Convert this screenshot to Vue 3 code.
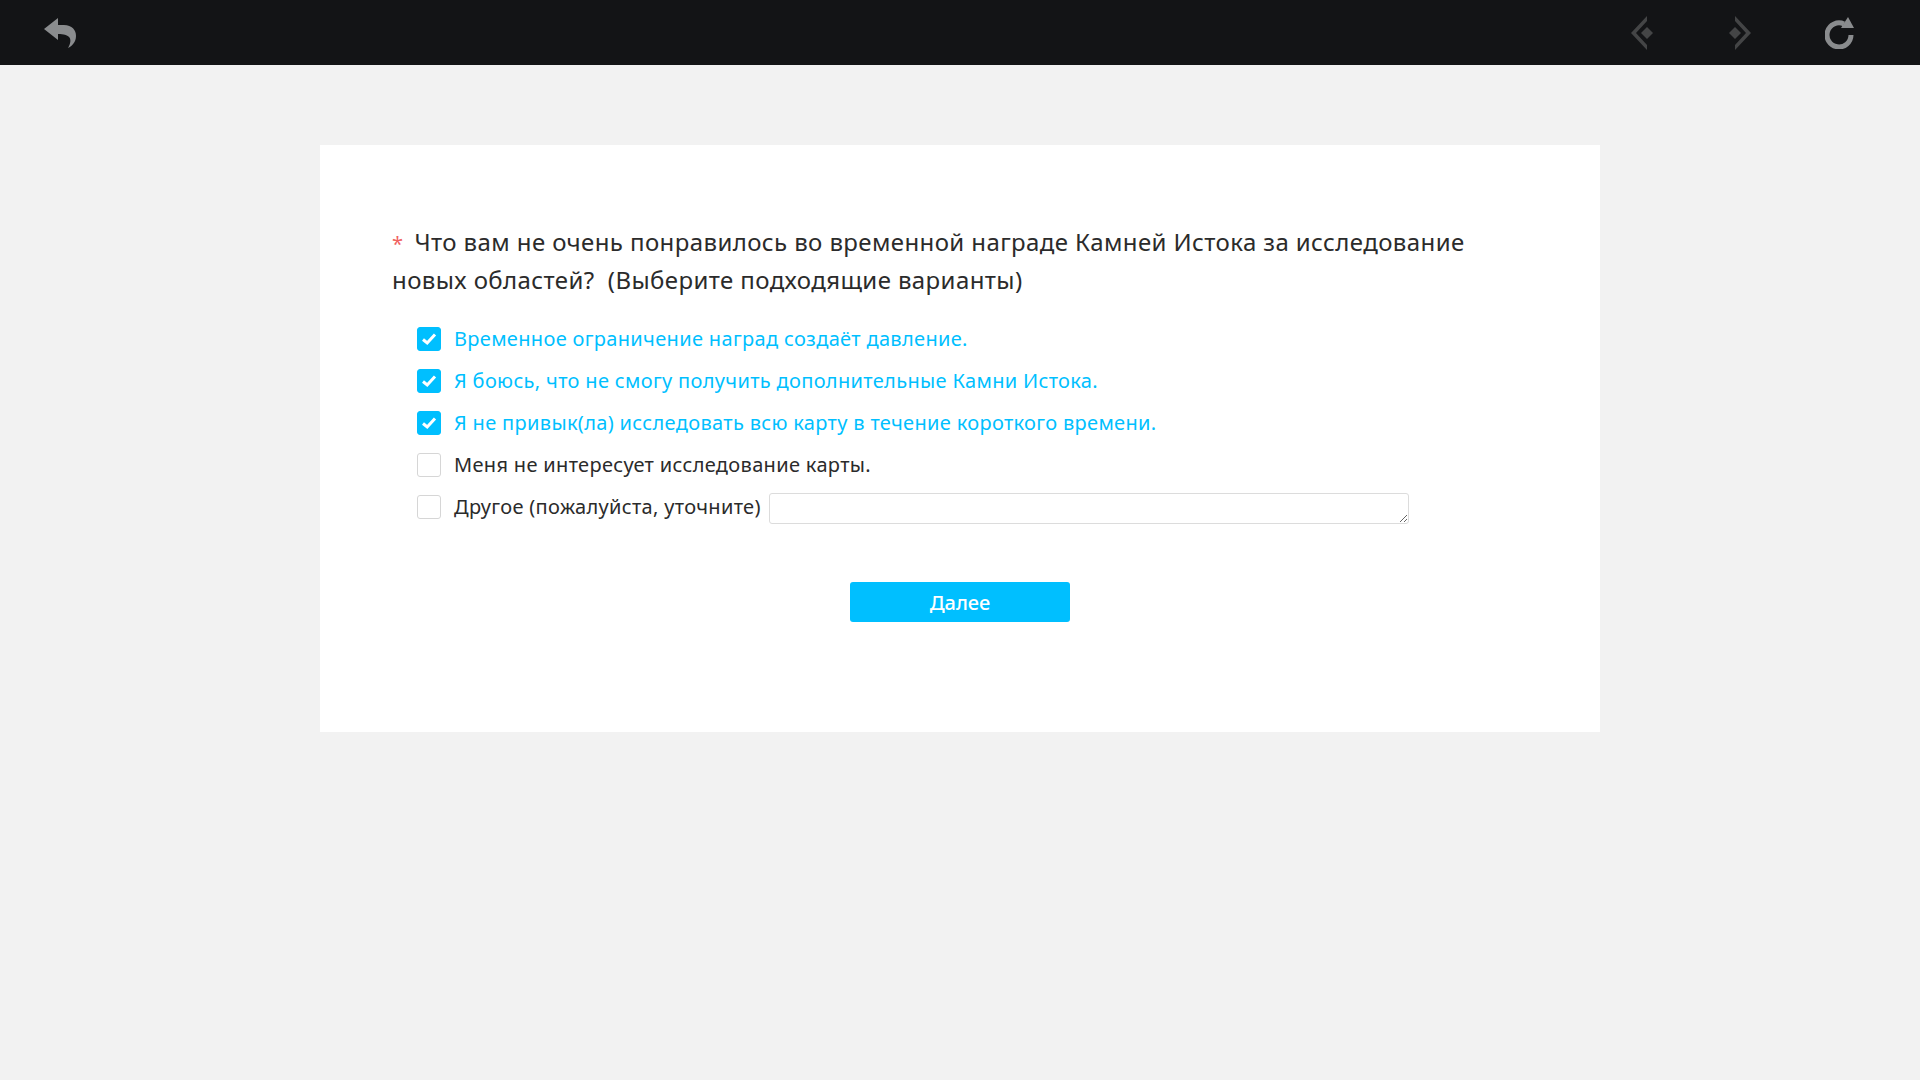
<script setup>
const options = [
  { text: 'Временное ограничение наград создаёт давление.', checked: true },
  { text: 'Я боюсь, что не смогу получить дополнительные Камни Истока.', checked: true },
  { text: 'Я не привык(ла) исследовать всю карту в течение короткого времени.', checked: true },
  { text: 'Меня не интересует исследование карты.', checked: false },
  { text: 'Другое (пожалуйста, уточните)', checked: false, other: true },
]
</script>

<template>
  <div class="page">
    <header class="bar">
      <button class="icon back" aria-label="Назад">
        <svg width="36" height="32" viewBox="0 0 36 32"><path d="M1 12 L15 1 V8 H21 C29 8 33 13 33 19 C33 25 29 29 25 31 C28 26 28 22 26 20 C24 18 21 17 15 17 V23 Z" fill="#8a8c8e"/></svg>
      </button>
      <div class="right">
        <button class="icon nav" aria-label="Предыдущая">
          <svg width="24" height="34" viewBox="0 0 24 34"><path d="M17 0 V5 L6 17 L17 29 V34 L1 17 Z" fill="#444546"/><path d="M17 11 L23 17 L17 23 L11 17 Z" fill="#444546"/></svg>
        </button>
        <button class="icon nav" aria-label="Следующая">
          <svg width="24" height="34" viewBox="0 0 24 34"><path d="M7 0 V5 L18 17 L7 29 V34 L23 17 Z" fill="#444546"/><path d="M7 11 L13 17 L7 23 L1 17 Z" fill="#444546"/></svg>
        </button>
        <button class="icon reload" aria-label="Обновить">
          <svg width="30" height="32" viewBox="0 0 30 32"><path d="M19 7 A12 12 0 1 0 26 18" fill="none" stroke="#8a8c8e" stroke-width="5"/><path d="M16 11 L23 0 L29 11 Z" fill="#8a8c8e"/></svg>
        </button>
      </div>
    </header>

    <main class="card">
      <h1 class="title"><span class="star">*</span>Что вам не очень понравилось во временной награде Камней Истока за исследование новых областей?&nbsp; (Выберите подходящие варианты)</h1>
      <ul class="options">
        <li v-for="o in options" :key="o.text" class="option" :class="{ on: o.checked }">
          <span class="box">
            <svg v-if="o.checked" width="16" height="14" viewBox="0 0 16 14"><path d="M2 7.5 L6.2 11 L14 2.5" fill="none" stroke="#fff" stroke-width="3"/></svg>
          </span>
          <span class="label">{{ o.text }}</span>
          <textarea v-if="o.other" class="other"></textarea>
        </li>
      </ul>
      <div class="actions"><button class="next">Далее</button></div>
    </main>
  </div>
</template>

<style>
html, body { margin: 0; background: #f2f2f2; }
</style>

<style scoped>
.page { min-height: 1080px; background: #f2f2f2; font-family: "Noto Sans", "Open Sans", sans-serif; color: #2b2b2b; }
.bar { height: 65px; background: #131416; display: flex; align-items: center; justify-content: space-between; padding: 0 65px 0 43px; box-sizing: border-box; }
.icon { background: none; border: 0; padding: 0; display: flex; }
.right { display: flex; align-items: center; }
.nav { margin-right: 74px; }
.nav + .nav { margin-right: 73px; }
.card { width: 1280px; height: 587px; margin: 80px auto 0; background: #fff; padding: 78px 72px 0; box-sizing: border-box; }
.title { margin: 0; font-size: 24px; line-height: 38px; font-weight: 400; letter-spacing: 0.4px; }
.star { color: #f0625f; margin-right: 11px; font-size: 20px; line-height: 0; }
.options { list-style: none; margin: 18px 0 0; padding: 0 0 0 25px; }
.option { display: flex; align-items: center; height: 42px; font-size: 20px; letter-spacing: 0.33px; }
.box { width: 24px; height: 24px; box-sizing: border-box; border: 1px solid #d6d6d6; border-radius: 3px; margin: 2px 13px 0 0; display: flex; align-items: center; justify-content: center; flex: none; }
.on .box { background: #00bfff; border-color: #00bfff; }
.on .label { color: #00bfff; }
.other { width: 640px; height: 31px; box-sizing: border-box; margin: 4px 0 0 8px; border: 1px solid #dcdcdc; border-radius: 3px; padding: 0; outline: none; display: block; }
.actions { display: flex; justify-content: center; margin-top: 55px; }
.next { width: 220px; height: 40px; background: #00bfff; color: #fff; border: 0; border-radius: 3px; font: 500 20px "Noto Sans", sans-serif; padding: 0; }
</style>
